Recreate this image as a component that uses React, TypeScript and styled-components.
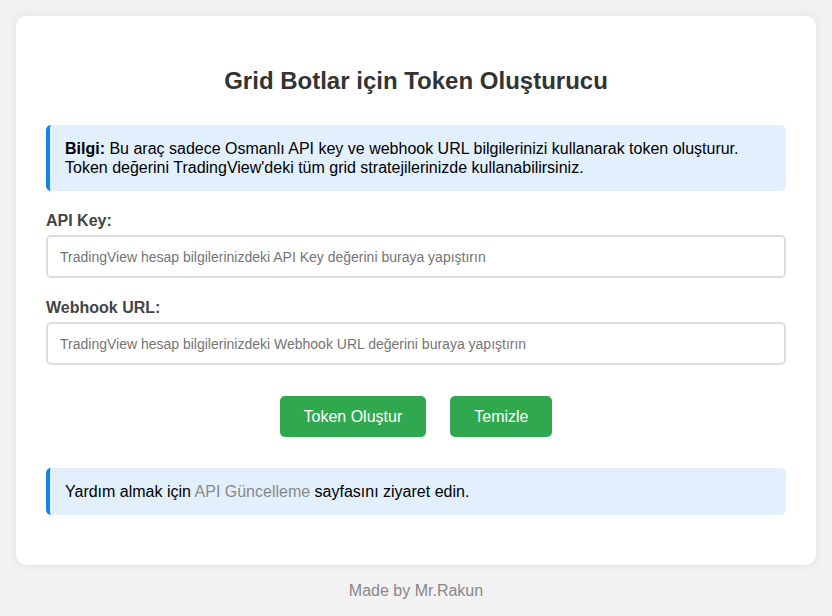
import React from 'react';
import styled, {createGlobalStyle} from 'styled-components';

const GlobalStyle = createGlobalStyle`
  * {
    box-sizing: border-box;
  }
  body {
    margin: 0;
    padding: 16px 16px 0 16px;
    background: #f2f2f2;
    font-family: "Liberation Sans", Arial, sans-serif;
    color: #000;
  }
`;

const App = () => {
  return (
    <>
      <GlobalStyle />
      <Card>
        <Title>Grid Botlar için Token Oluşturucu</Title>
        <InfoBox>
          <strong>Bilgi:</strong> Bu araç sadece Osmanlı API key ve webhook URL
          bilgilerinizi kullanarak token oluşturur. Token değerini
          TradingView'deki tüm grid stratejilerinizde kullanabilirsiniz.
        </InfoBox>
        <Field>
          <Label htmlFor="apiKey">API Key:</Label>
          <Input
            id="apiKey"
            placeholder="TradingView hesap bilgilerinizdeki API Key değerini buraya yapıştırın"
          />
        </Field>
        <Field>
          <Label htmlFor="webhook">Webhook URL:</Label>
          <Input
            id="webhook"
            placeholder="TradingView hesap bilgilerinizdeki Webhook URL değerini buraya yapıştırın"
          />
        </Field>
        <Buttons>
          <Button>Token Oluştur</Button>
          <Button>Temizle</Button>
        </Buttons>
        <InfoBox>
          Yardım almak için <HelpLink href="#">API Güncelleme</HelpLink> sayfasını
          ziyaret edin.
        </InfoBox>
      </Card>
      <Footer>Made by Mr.Rakun</Footer>
    </>
  );
};

const Card = styled.div`
  max-width: 800px;
  margin: 0 auto;
  background: #fff;
  border-radius: 10px;
  box-shadow: 0 0 10px rgba(0, 0, 0, 0.08);
  padding: 30px 30px 50px 30px;
  display: flex;
  flex-direction: column;
`;

const Title = styled.h2`
  margin: 21px 0 30px 0;
  text-align: center;
  font-size: 24px;
  font-weight: bold;
  color: #333;
  line-height: 28px;
`;

const InfoBox = styled.div`
  background: #e2f0fd;
  border-left: 4px solid #0d86e6;
  border-radius: 5px;
  padding: 14px 15px;
  font-size: 16px;
  line-height: 19px;
  margin-bottom: 20px;

  &:last-child {
    margin-bottom: 0;
  }
`;

const Field = styled.div`
  display: flex;
  flex-direction: column;
  margin-bottom: 20px;
`;

const Label = styled.label`
  font-size: 16px;
  font-weight: bold;
  color: #444;
  line-height: 19px;
  margin-bottom: 5px;
`;

const Input = styled.input`
  width: 100%;
  height: 43px;
  padding: 0 12px;
  border: 2px solid #ddd;
  border-radius: 5px;
  font-family: "Liberation Sans", Arial, sans-serif;
  font-size: 14px;
  outline: none;

  &::placeholder {
    color: #757575;
  }
`;

const Buttons = styled.div`
  display: flex;
  justify-content: center;
  gap: 24px;
  margin: 11px 0 31px 0;
`;

const Button = styled.button`
  background: #2fa84f;
  color: #fff;
  border: none;
  border-radius: 5px;
  height: 41px;
  padding: 0 24px;
  font-family: "Liberation Sans", Arial, sans-serif;
  font-size: 16px;
  cursor: pointer;
`;

const HelpLink = styled.a`
  color: #888;
  text-decoration: none;
`;

const Footer = styled.div`
  text-align: center;
  color: #888;
  font-size: 16px;
  margin-top: 16px;
  line-height: 19px;
`;

export default App;
